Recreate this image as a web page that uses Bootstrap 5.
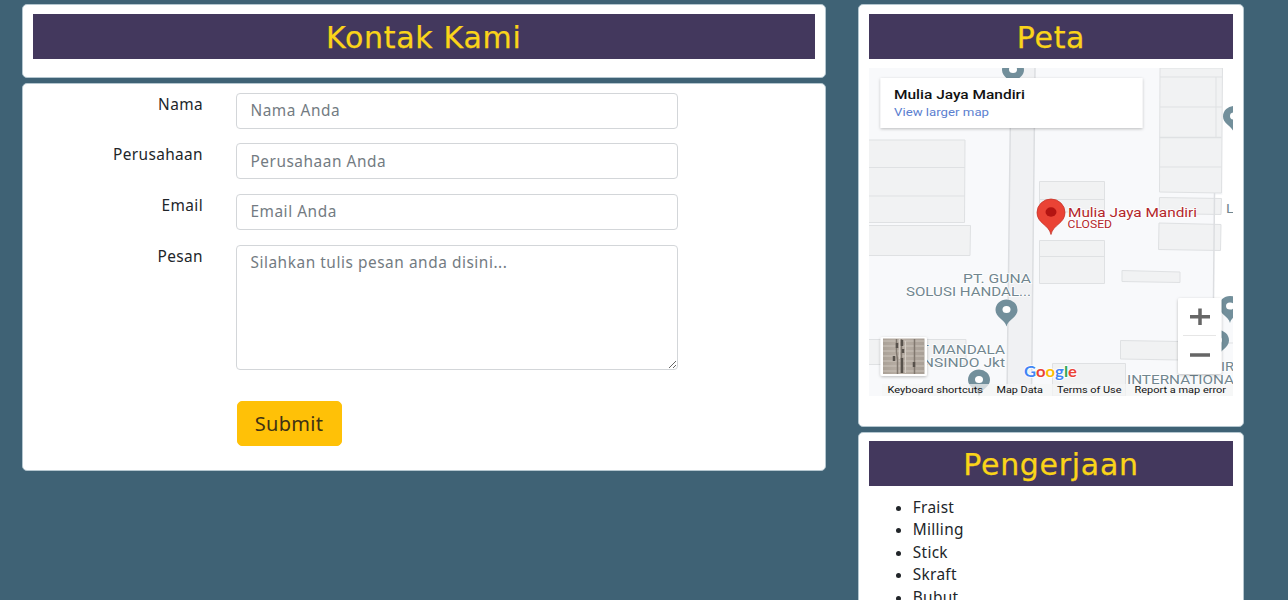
<!DOCTYPE html>
<html lang="id">
<head>
<meta charset="utf-8">
<meta name="viewport" content="width=device-width, initial-scale=1">
<title>Kontak Kami</title>
<link href="https://cdn.jsdelivr.net/npm/bootstrap@5.3.0/dist/css/bootstrap.min.css" rel="stylesheet">
<style>
body{background:#3f6275;font-family:"Noto Sans",sans-serif;color:#212529;height:600px;overflow:hidden;font-size:15.4px}
.page{padding:4px 44px 0 22px;column-gap:32.5px;grid-template-columns:803.5px 386px;height:600px;overflow:hidden}
.panel{border:1px solid #b4c6cf;border-radius:5px;padding:9px 10px 0;background:#fff}
.title{background:#43385d;color:#fad419;font:400 30px/45px "DejaVu Sans",sans-serif;height:45px;margin:0;text-align:center;letter-spacing:.7px;padding-top:1px;-webkit-text-stroke:.25px #fad419}
.head-panel{height:73.5px}
.form-panel{height:388px;margin-top:5px}
.map-panel{height:422.5px}
.work-panel{height:200px;margin-top:5px;padding-top:8.5px}
.field{display:grid;grid-template-columns:170px 442px;column-gap:33.4px;margin-bottom:14.7px}
.field label{text-align:right;line-height:22px;padding-top:1px;letter-spacing:.38px}
.field .form-control{height:36px;padding:5px 13px;line-height:24px;border-color:#d3d6d9;border-radius:4px;font-size:15.4px;letter-spacing:.55px}
.field .form-control::placeholder{color:#737b82}
.field textarea.form-control{height:125.5px}
.btn-send{margin:16.5px 0 0 203.5px;width:105px;height:45px;border-radius:5px;font-size:20px;padding:0;color:#3f3214;letter-spacing:.3px}
.map{display:block;margin-top:9px;width:364px;height:328px}
.works{margin:10.5px 0 0;padding-left:43.8px;line-height:22.5px;letter-spacing:.3px}
</style>
</head>
<body>
<main class="page d-grid align-items-start">
  <div>
    <section class="panel head-panel"><h1 class="title">Kontak Kami</h1></section>
    <section class="panel form-panel">
      <form>
        <div class="field"><label for="nama">Nama</label><input id="nama" class="form-control" placeholder="Nama Anda"></div>
        <div class="field"><label for="pt">Perusahaan</label><input id="pt" class="form-control" placeholder="Perusahaan Anda"></div>
        <div class="field"><label for="email">Email</label><input id="email" class="form-control" placeholder="Email Anda"></div>
        <div class="field"><label for="pesan">Pesan</label><textarea id="pesan" class="form-control" placeholder="Silahkan tulis pesan anda disini..."></textarea></div>
        <button type="button" class="btn btn-warning btn-send">Submit</button>
      </form>
    </section>
  </div>
  <aside>
    <section class="panel map-panel">
      <h2 class="title">Peta</h2>
      <svg class="map" viewBox="869 68 364 328" font-family="Roboto, sans-serif">
        <defs>
          <filter id="sh" x="-10%" y="-10%" width="120%" height="130%"><feDropShadow dx="0" dy="1" stdDeviation="1.5" flood-opacity=".25"/></filter>
          <g id="pin"><path d="M0 14C-1.500 7-11 5-11-2.500A11 10.500 0 0 1 11-2.500C11 5 1.500 7 0 14Z" fill="#728f9b"/><ellipse cy="-3" rx="4" ry="3.600" fill="#fff"/></g>
          <linearGradient id="photo"><stop stop-color="#aaa197"/><stop offset=".4" stop-color="#b9afa5"/><stop offset="1" stop-color="#a89f96"/></linearGradient>
        </defs>
        <path fill="#f8f9fb" d="M869 68h365v328H869z"/>
        <path fill="#fff" d="M1222.500 68H1234v240h-20V195h8.500z"/>
        <path fill="#f0f1f3" d="M1011 68h24l-3 328h-25z"/>
        <path fill="none" stroke="#dcdee1" stroke-width="1.500" d="M1011 68L1007 396M1035 68l-3.500 328"/>
        <g fill="#f1f2f3" stroke="#dfe1e3">
          <path d="M868 140h97l-.5 82.500H868zM868 167.500h97M868 196h97M868 225.500h102.500l-.5 30H868z"/>
          <path d="M1160 68h62.500l-1 125-62-1zM1160 77h62M1160 107h62M1216 77v60M1159.500 167h62"/>
          <path d="M1159.500 137.500h62" stroke-width="1.500"/>
          <path d="M1159.500 197.500l62 1-.5 16-62-1zM1159 223l62 1.500-.5 26-62-1z"/>
          <path d="M1039.500 181.500h65V212h-65zM1039.500 199.500h65M1039.500 240.500h65v43h-65zM1039.500 256.500h65M1122 270.500l58 1.500v10.500l-58-1zM1120.500 340.500l60 1v18.500l-60-1z"/>
          <path d="M868 339.500h98v25h-98zM1052.500 363.500h73V396h-73z"/>
        </g>
        <path d="M1214.500 193l-1 105" stroke="#dcdee1" stroke-width="1.500"/>
        <path d="M1222 343h11" stroke="#dfe1e3"/>
        <use href="#pin" x="1013" y="72.500"/>
        <use href="#pin" x="1234" y="119"/>
        <use href="#pin" x="1006.500" y="312.500"/>
        <use href="#pin" x="1230" y="309"/>
        <use href="#pin" x="979" y="382.500"/>
        <use href="#pin" x="1218" y="343"/>
        <g fill="#71868f" font-size="13" stroke="#fff" stroke-width="1.500" paint-order="stroke">
          <text x="963" y="283" textLength="68" lengthAdjust="spacingAndGlyphs">PT. GUNA</text>
          <text x="906" y="296" textLength="125" lengthAdjust="spacingAndGlyphs">SOLUSI HANDAL...</text>
          <text x="910" y="353.500" textLength="95" lengthAdjust="spacingAndGlyphs">PT MANDALA</text>
          <text x="903" y="366.500" textLength="102" lengthAdjust="spacingAndGlyphs">RANSINDO Jkt</text>
          <text x="1226" y="213" textLength="8" lengthAdjust="spacingAndGlyphs">L</text>
          <text x="1221" y="371" textLength="13" lengthAdjust="spacingAndGlyphs">IR</text>
          <text x="1127" y="384" textLength="107" lengthAdjust="spacingAndGlyphs">INTERNATIONA</text>
        </g>
        <path d="M1051 234.500c-2-10-14-11-14-22a14 13.500 0 0 1 28 0c0 11-12 12-14 22z" fill="#ea4335" stroke="#c5352a" stroke-width=".8"/>
        <ellipse cx="1051" cy="212" rx="5.500" ry="4.700" fill="#b31412"/>
        <g fill="#b3262a" stroke="#fff" stroke-width="1.500" paint-order="stroke">
          <text x="1068" y="216.500" font-size="13" textLength="129" lengthAdjust="spacingAndGlyphs">Mulia Jaya Mandiri</text>
          <text x="1067.500" y="227.500" font-size="10" textLength="44.500" lengthAdjust="spacingAndGlyphs">CLOSED</text>
        </g>
        <path fill="#fff" filter="url(#sh)" d="M880.500 78h262v50h-262z"/>
        <text x="894" y="99" font-size="13" font-weight="500" fill="#111" textLength="131" lengthAdjust="spacingAndGlyphs">Mulia Jaya Mandiri</text>
        <text x="894" y="116" font-size="11.500" fill="#5b80d0" textLength="95" lengthAdjust="spacingAndGlyphs">View larger map</text>
        <rect x="1178" y="298" width="43.500" height="76" rx="2" fill="#fff" filter="url(#sh)"/>
        <path d="M1183 335.500h33" stroke="#e6e6e6"/>
        <path d="M1190 316.700h20M1200 308.500v16.500M1190 355h20" stroke="#666" stroke-width="3.500"/>
        <rect x="880.500" y="337" width="46.500" height="39" rx="2" fill="#fff" filter="url(#sh)"/>
        <path fill="url(#photo)" d="M883 338.500h41.500V374H883z"/>
        <g fill="none"><path d="M883 341h41M883 346h41M883 351h41M883 356h41M883 361h41M883 366h41M883 371h41" stroke="#cbc3ba"/>
        <path d="M896.500 339v13l1 8v14M901.500 339v34M914.500 339v35" stroke="#81786f" stroke-width="1.500"/>
        <path d="M902 340v6M903 349v4M902 358v15M897 343v5M914 362v5M894 356v5" stroke="#57514b" stroke-width="2.500"/>
        <path d="M905.500 341v32M899.500 339v20" stroke="#d4cdc5"/></g>
        <text x="1024" y="377" font-family="Lato, sans-serif" font-weight="700" font-size="15" stroke="#fff" stroke-width="1.500" paint-order="stroke" textLength="53" lengthAdjust="spacingAndGlyphs"><tspan fill="#4285f4">G</tspan><tspan fill="#ea4335">o</tspan><tspan fill="#fbbc04">o</tspan><tspan fill="#4285f4">g</tspan><tspan fill="#34a853">l</tspan><tspan fill="#ea4335">e</tspan></text>
        <path fill="#f5f5f5" fill-opacity=".72" d="M882 384h352v12H882z"/>
        <g fill="#111" font-size="9.300">
          <text x="887.500" y="393" textLength="95.500" lengthAdjust="spacingAndGlyphs">Keyboard shortcuts</text>
          <text x="996.500" y="393" textLength="46.500" lengthAdjust="spacingAndGlyphs">Map Data</text>
          <text x="1057" y="393" textLength="64.500" lengthAdjust="spacingAndGlyphs">Terms of Use</text>
          <text x="1134.500" y="393" textLength="91.500" lengthAdjust="spacingAndGlyphs">Report a map error</text>
        </g>
      </svg>
    </section>
    <section class="panel work-panel">
      <h2 class="title">Pengerjaan</h2>
      <ul class="works"><li>Fraist</li><li>Milling</li><li>Stick</li><li>Skraft</li><li>Bubut</li></ul>
    </section>
  </aside>
</main>
<script src="https://cdn.jsdelivr.net/npm/bootstrap@5.3.0/dist/js/bootstrap.bundle.min.js"></script>
</body>
</html>
